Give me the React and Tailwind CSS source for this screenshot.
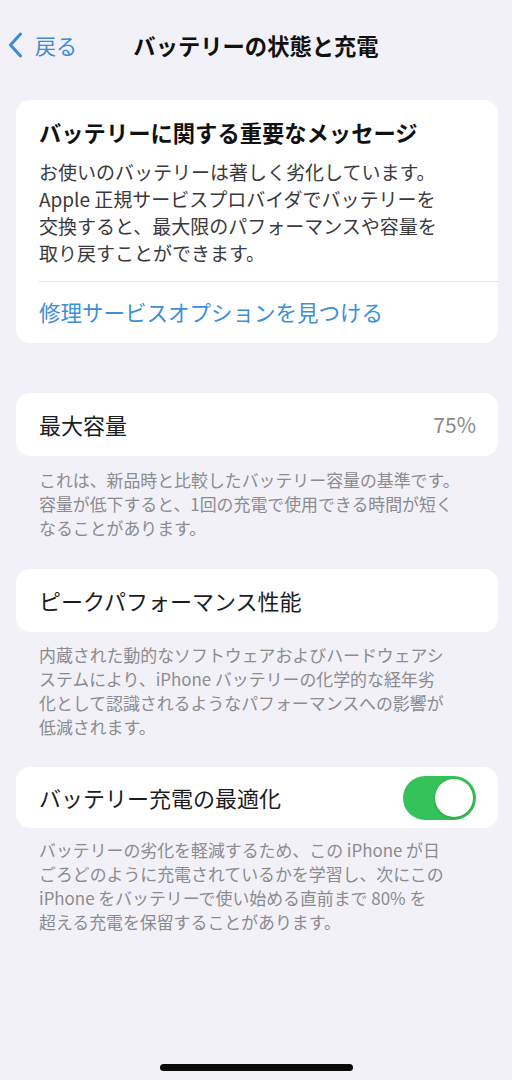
import React from 'react';

const font = { fontFamily: '"Noto Sans CJK JP", "Noto Sans", sans-serif' };

function Footer({ lines, className = '' }) {
  return (
    <p className={`px-[39px] text-[16.9px] leading-[24px] text-[#8b8b90] ${className}`}>
      {lines.map((l, i) => (
        <span key={i} className="block whitespace-nowrap">{l}</span>
      ))}
    </p>
  );
}

export default function App() {
  return (
    <div style={font} className="w-full min-h-[1080px] bg-[#f2f1f7] flex flex-col">
      {/* Nav bar */}
      <div className="h-[90px] grid grid-cols-[1fr_auto_1fr] items-center">
        <div className="flex items-center pl-[8px] gap-[12px] text-[#3b8cd8]">
          <svg width="15" height="26" viewBox="0 0 15 26" fill="none">
            <path d="M12.5 2L2.5 13l10 11" stroke="currentColor" strokeWidth="3" strokeLinecap="round" strokeLinejoin="round" />
          </svg>
          <span className="text-[21px] leading-none">戻る</span>
        </div>
        <h1 className="text-[22.3px] font-bold text-[#111] leading-none">バッテリーの状態と充電</h1>
        <div />
      </div>

      {/* Important message */}
      <div className="mt-[10px] mx-[16px] mr-[14px] bg-white rounded-[14px]">
        <div className="pl-[23px] pr-[16px] pt-[17px] pb-[15px]">
          <h2 className="text-[22.3px] font-bold leading-[30px] text-[#111] whitespace-nowrap">バッテリーに関する重要なメッセージ</h2>
          <p className="mt-[11px] text-[19px] leading-[27px] text-[#3a3a3c]">
            <span className="block whitespace-nowrap">お使いのバッテリーは著しく劣化しています。</span>
            <span className="block whitespace-nowrap">Apple 正規サービスプロバイダでバッテリーを</span>
            <span className="block whitespace-nowrap">交換すると、最大限のパフォーマンスや容量を</span>
            <span className="block whitespace-nowrap">取り戻すことができます。</span>
          </p>
        </div>
        <div className="ml-[23px] h-px bg-[#e3e3e8]" />
        <div className="h-[61px] pl-[23px] flex items-center">
          <span className="text-[21.5px] text-[#3d8fd9] whitespace-nowrap">修理サービスオプションを見つける</span>
        </div>
      </div>

      {/* Max capacity */}
      <div className="mt-[50px] mx-[16px] mr-[14px] h-[63px] bg-white rounded-[14px] pl-[23px] pr-[22px] flex items-center justify-between">
        <span className="text-[22px] text-[#1c1c1e]">最大容量</span>
        <span className="text-[21px] text-[#8a8a8e]">75%</span>
      </div>
      <Footer
        className="mt-[12px]"
        lines={[
          'これは、新品時と比較したバッテリー容量の基準です。',
          '容量が低下すると、1回の充電で使用できる時間が短く',
          'なることがあります。',
        ]}
      />

      {/* Peak performance */}
      <div className="mt-[29px] mx-[16px] mr-[14px] h-[63px] bg-white rounded-[14px] pl-[23px] flex items-center">
        <span className="text-[22px] text-[#1c1c1e]">ピークパフォーマンス性能</span>
      </div>
      <Footer
        className="mt-[11px]"
        lines={[
          '内蔵された動的なソフトウェアおよびハードウェアシ',
          'ステムにより、iPhone バッテリーの化学的な経年劣',
          '化として認識されるようなパフォーマンスへの影響が',
          '低減されます。',
        ]}
      />

      {/* Optimized charging */}
      <div className="mt-[28px] mx-[16px] mr-[14px] h-[61px] bg-white rounded-[14px] pl-[23px] pr-[22px] flex items-center justify-between">
        <span className="text-[22px] text-[#1c1c1e]">バッテリー充電の最適化</span>
        <div className="w-[73px] h-[44px] rounded-full bg-[#34c259] flex items-center justify-end pr-[3px]">
          <div className="w-[38px] h-[38px] rounded-full bg-white shadow-[0_1px_3px_rgba(0,0,0,0.2)]" />
        </div>
      </div>
      <Footer
        className="mt-[10px]"
        lines={[
          'バッテリーの劣化を軽減するため、この iPhone が日',
          'ごろどのように充電されているかを学習し、次にこの',
          'iPhone をバッテリーで使い始める直前まで 80% を',
          '超える充電を保留することがあります。',
        ]}
      />

      <div className="flex-1" />
      {/* Home indicator */}
      <div className="flex justify-center pb-[9px]">
        <div className="w-[193px] h-[7px] rounded-full bg-[#0b0b0b]" />
      </div>
    </div>
  );
}
